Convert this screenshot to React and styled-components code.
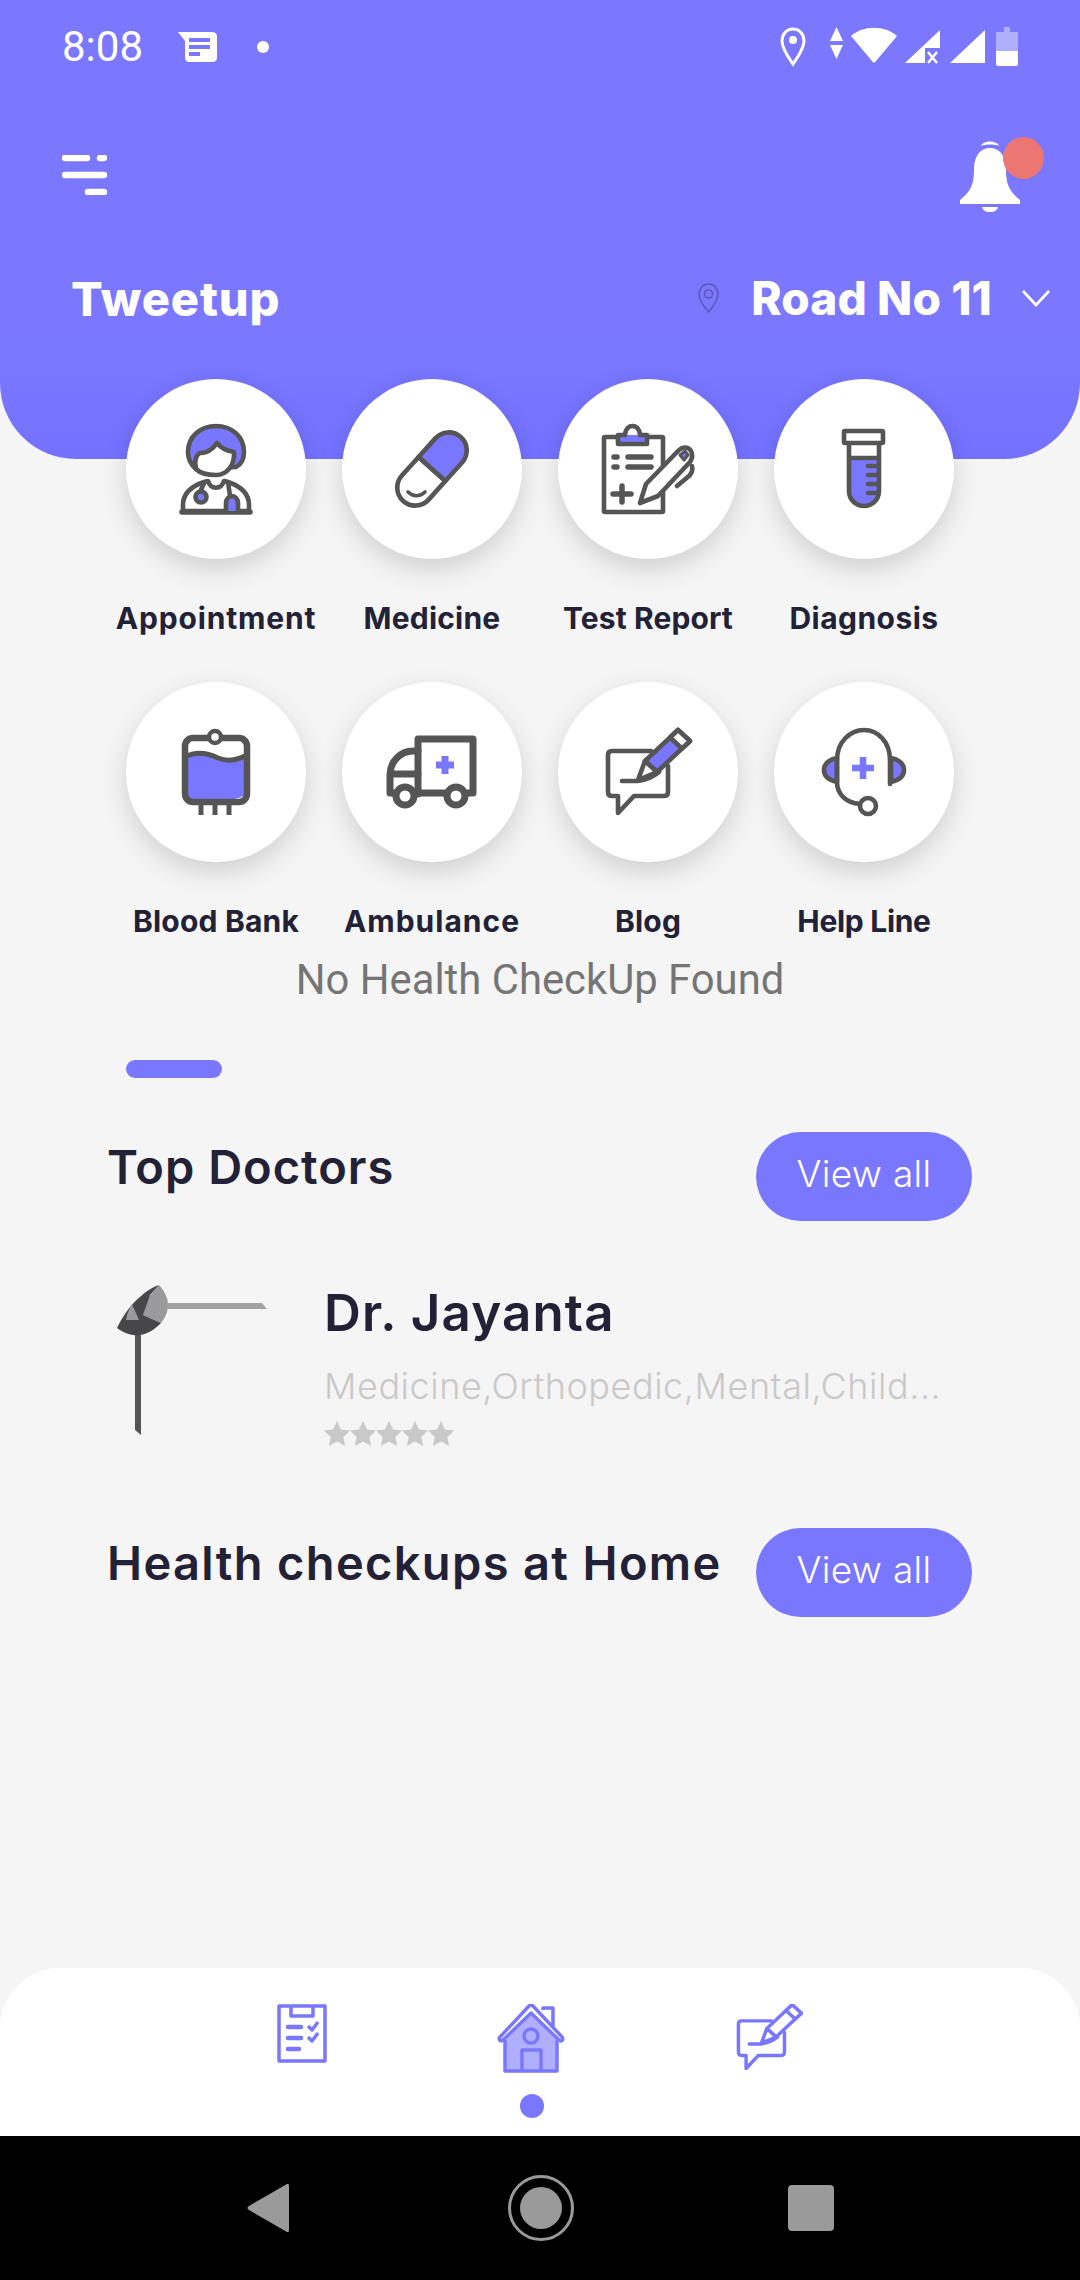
import styled, { createGlobalStyle } from 'styled-components'

const PURPLE = '#7a77ff'
const INK = '#555555'
const DARK = '#232136'

const GlobalStyle = createGlobalStyle`
  html, body {
    margin: 0;
    padding: 0;
    background: #f5f5f5;
  }
  * {
    box-sizing: border-box;
  }
`

const Page = styled.div`
  width: 1080px;
  height: 2280px;
  display: flex;
  flex-direction: column;
  overflow: hidden;
  background: #f5f5f5;
  font-family: Inter, 'Liberation Sans', sans-serif;
`

const Header = styled.header`
  height: 459px;
  flex: none;
  padding-top: 27px;
  background: linear-gradient(#7b78ff 72%, #7471ff);
  border-radius: 0 0 76px 76px;
`

const StatusBar = styled.div`
  height: 39px;
  padding: 0 62px;
  display: flex;
  align-items: center;
  justify-content: space-between;
  color: #fff;
`

const StatusLeft = styled.div`
  display: flex;
  align-items: center;
`

const Clock = styled.span`
  width: 116px;
  font: 400 42px/39px Roboto, sans-serif;
`

const StatusDot = styled.span`
  width: 12px;
  height: 12px;
  margin-left: 40px;
  border-radius: 50%;
  background: #fff;
`

const Toolbar = styled.div`
  height: 77px;
  margin-top: 70px;
  padding: 0 36px 0 62px;
  display: flex;
  align-items: center;
  justify-content: space-between;
`

const BellWrap = styled.div`
  position: relative;
  width: 85px;
  height: 76px;
  padding-top: 3px;
`

const Badge = styled.span`
  position: absolute;
  top: 0;
  right: 0;
  width: 41px;
  height: 42px;
  border-radius: 50%;
  background: #ec7672;
`

const TitleRow = styled.div`
  height: 60px;
  margin-top: 55px;
  padding: 0 30px 0 71px;
  display: flex;
  align-items: center;
  justify-content: space-between;
`

const Brand = styled.h1`
  margin: 0;
  color: #fff;
  font-size: 47px;
  font-weight: 800;
  letter-spacing: 0.9px;
`

const Location = styled.div`
  display: flex;
  align-items: center;
`

const Road = styled.span`
  margin: 0 30px 0 31px;
  color: #fff;
  font-size: 46px;
  font-weight: 800;
  letter-spacing: 0.1px;
  white-space: nowrap;
`

const ServiceGrid = styled.section`
  position: relative;
  margin: -80px 108px 0;
  display: grid;
  grid-template-columns: repeat(4, 216px);
  row-gap: 44px;
`

const Service = styled.div`
  display: flex;
  flex-direction: column;
  align-items: center;
`

const Circle = styled.div`
  width: 180px;
  height: 180px;
  border-radius: 50%;
  background: #fff;
  box-shadow: 0 10px 26px rgba(0, 0, 0, 0.15);
`

const ServiceLabel = styled.span`
  margin-top: 39px;
  color: ${DARK};
  font-size: 30px;
  line-height: 40px;
  font-weight: 700;
  letter-spacing: ${(p) => p.$spacing}px;
  white-space: nowrap;
`

const EmptyNote = styled.p`
  margin: 15px 0 0;
  color: #757575;
  font: 400 41.8px/48px Roboto, sans-serif;
  text-align: center;
`

const Progress = styled.div`
  width: 96px;
  height: 18px;
  margin: 56px 0 0 126px;
  border-radius: 9px;
  background: ${PURPLE};
`

const SectionHead = styled.div`
  margin-top: ${(p) => p.$top}px;
  padding: 0 108px 0 107px;
  display: flex;
  align-items: flex-start;
  justify-content: space-between;
`

const SectionTitle = styled.h2`
  margin: 4px 0 0;
  color: ${DARK};
  font-size: 47px;
  line-height: 62px;
  font-weight: 600;
  letter-spacing: ${(p) => p.$spacing}px;
  white-space: nowrap;
`

const ViewAll = styled.button`
  width: 216px;
  height: 89px;
  flex: none;
  padding: 0 0 7px;
  border: 0;
  border-radius: 45px;
  background: ${PURPLE};
  color: #fff;
  font-family: Inter, sans-serif;
  font-size: 37px;
  font-weight: 300;
  letter-spacing: 0.3px;
`

const DoctorRow = styled.article`
  height: 188px;
  margin-top: 39px;
  padding-left: 90px;
  display: flex;
  gap: 54px;
`

const DoctorInfo = styled.div`
  display: flex;
  flex-direction: column;
`

const DoctorName = styled.h3`
  margin: 18px 0 0;
  color: ${DARK};
  font-size: 51px;
  line-height: 70px;
  font-weight: 600;
  letter-spacing: 1.2px;
`

const Specialty = styled.p`
  margin: 16px 0 0;
  color: #c9c9c9;
  font-size: 36px;
  line-height: 44px;
  font-weight: 300;
  letter-spacing: 0.55px;
  white-space: nowrap;
`

const Stars = styled.div`
  margin-top: 13px;
  display: flex;
`

const BottomBar = styled.nav`
  height: 168px;
  flex: none;
  margin-top: auto;
  padding-top: 36px;
  display: flex;
  justify-content: center;
  align-items: flex-start;
  gap: 170px;
  background: #fff;
  border-radius: 60px 60px 0 0;
`

const NavItem = styled.div`
  display: flex;
  flex-direction: column;
  align-items: center;
`

const ActiveDot = styled.span`
  width: 24px;
  height: 24px;
  margin-top: 21px;
  border-radius: 50%;
  background: ${PURPLE};
`

const SystemNav = styled.div`
  height: 144px;
  flex: none;
  display: flex;
  align-items: center;
  justify-content: center;
  background: #000;
`

const BackKey = styled.svg`
  width: 42px;
  height: 50px;
`

const HomeKey = styled.div`
  width: 66px;
  height: 66px;
  margin: 0 214px 0 219px;
  display: flex;
  align-items: center;
  justify-content: center;
  border: 3px solid #9a9a9a;
  border-radius: 50%;
  &::after {
    content: '';
    width: 42px;
    height: 42px;
    border-radius: 50%;
    background: #9a9a9a;
  }
`

const SquareKey = styled.div`
  width: 46px;
  height: 46px;
  border-radius: 4px;
  background: #9a9a9a;
`

const Glyph = ({ children }) => (
  <svg width="180" height="180" viewBox="0 0 180 180" fill="none" stroke={INK} strokeWidth="4.6" strokeLinecap="round" strokeLinejoin="round">
    {children}
  </svg>
)

const DoctorGlyph = () => (
  <Glyph>
    <path d="M70 90C64 85 62 79 62 73C62 57 75 47 90 47C105 47 118 57 118 73C118 79 116 85 110 88Z" fill={PURPLE} />
    <path d="M70 90C68 82 70 76 74 74C81 74 87 70 91 64C95 69 101 72 108 73C109 86 101 96 90 96C82 96 74 94 70 90Z" fill="#fff" />
    <path d="M57 132V126C57 114 66 107 78 103L82 102C85 111 95 111 98 102L102 103C114 107 123 114 123 126V132Z" fill="#fff" />
    <path d="M56 133H124" strokeWidth="5.5" />
    <path d="M75 111L78 104" />
    <circle cx="75" cy="118" r="5.5" fill={PURPLE} />
    <path d="M100 132V124C100 120 103 117 106 117C109 117 112 120 112 124V132" fill={PURPLE} />
    <path d="M104 117L102 103" />
  </Glyph>
)

const PillGlyph = () => (
  <Glyph>
    <g transform="rotate(-48 90 90)">
      <path d="M90 72H65A18 18 0 0 0 65 108H90Z" fill="#fff" />
      <path d="M90 72H115A18 18 0 0 1 115 108H90Z" fill={PURPLE} />
    </g>
    <path d="M66 113C71 118 78 118 83 113" strokeWidth="3.6" />
  </Glyph>
)

const ReportGlyph = () => (
  <Glyph>
    <rect x="46" y="58" width="59" height="75" rx="1" />
    <path d="M60 65V56H67C68 44 81 44 82 56H89V65Z" fill={PURPLE} />
    <path d="M67 56C68 44 81 44 82 56H75Z" fill="#fff" stroke="none" />
    <path d="M67 56C68 44 81 44 82 56" />
    <path d="M56 78H59M70 78H93M56 88H59M70 88H93" strokeWidth="5.5" />
    <path d="M64 107V123M55 115H73" strokeWidth="5.5" />
    <path d="M82 124L88 105L121 71C125 67 131 68 133 72C135 76 134 80 132 83L100 117Z" fill="#fff" />
    <path d="M122 76L127 72L130 76L126 81Z" fill={PURPLE} strokeWidth="3" />
    <path d="M119 107L131 97C134 94 135 91 134 87" />
  </Glyph>
)

const TubeGlyph = () => (
  <Glyph>
    <path d="M75 79H105V112A15 15 0 0 1 75 112Z" fill={PURPLE} stroke="none" />
    <path d="M75 63V112A15 15 0 0 0 105 112V63" />
    <rect x="70" y="52" width="39" height="12" rx="1" fill="#fff" />
    <path d="M75 79H105M94 87H104M94 96H104M94 105H104M94 114H104" />
  </Glyph>
)

const BagGlyph = () => (
  <Glyph>
    <path d="M59 75C72 68 84 72 92 76C102 80 112 78 121 73V112C104 122 76 122 59 116Z" fill={PURPLE} stroke="none" />
    <rect x="59" y="56" width="62" height="64" rx="8" strokeWidth="6.5" />
    <path d="M59 75C72 68 84 72 92 76C102 80 112 78 121 73" strokeWidth="5" />
    <circle cx="89" cy="55" r="6" fill="#fff" strokeWidth="4.5" />
    <path d="M75 122V133M89 122V133M103 122V133" strokeWidth="5" strokeLinecap="butt" />
  </Glyph>
)

const AmbulanceGlyph = () => (
  <Glyph>
    <path d="M76 112V57H131V111H126" strokeWidth="7" />
    <path d="M102 111H76" strokeWidth="7" />
    <path d="M76 69H71C58 69 48 80 48 93V111H52M48 92H76" strokeWidth="7" />
    <circle cx="63" cy="114" r="9" fill="#fff" strokeWidth="7" />
    <circle cx="114" cy="114" r="9" fill="#fff" strokeWidth="7" />
    <path d="M103 74V92M94 83H112" stroke={PURPLE} strokeWidth="7" strokeLinecap="butt" />
  </Glyph>
)

// same drawing in the grid (grey) and the bottom bar (purple)
const BlogShape = ({ accent }) => (
  <>
    <path d="M93 69H54C51 69 50 71 50 73V110C50 113 52 114 54 114H60V131L76 114H106C109 114 110 112 110 110V84" />
    <path d="M64 99H80C88 98 95 95 101 90" />
    <path d="M87 79L120 48L132 59L99 90Z" fill={accent} />
    <path d="M112 55.5L124 66.5L132 59L120 48Z" fill="#fff" />
    <path d="M87 79L80 98L99 90Z" fill="#fff" />
  </>
)

const BlogGlyph = () => (
  <Glyph>
    <BlogShape accent={PURPLE} />
  </Glyph>
)

const HelpGlyph = () => (
  <Glyph>
    <path d="M63 76C54 78 50 82 50 88C50 94 54 98 63 100Z" fill={PURPLE} />
    <path d="M117 76C126 78 130 82 130 88C130 94 126 98 117 100Z" fill={PURPLE} />
    <path d="M116 102V78C116 60 104 48 90 48C76 48 63 60 63 78V100C63 112 72 121 86 122" />
    <circle cx="94" cy="124" r="8" fill="#fff" />
    <path d="M89 75V97M78 86H100" stroke={PURPLE} strokeWidth="6.5" strokeLinecap="butt" />
  </Glyph>
)

const services = [
  { label: 'Appointment', icon: DoctorGlyph, spacing: 0.85 },
  { label: 'Medicine', icon: PillGlyph, spacing: 0.2 },
  { label: 'Test Report', icon: ReportGlyph, spacing: 0.1 },
  { label: 'Diagnosis', icon: TubeGlyph, spacing: 0.45 },
  { label: 'Blood Bank', icon: BagGlyph, spacing: 0.2 },
  { label: 'Ambulance', icon: AmbulanceGlyph, spacing: 1 },
  { label: 'Blog', icon: BlogGlyph, spacing: 0.2 },
  { label: 'Help Line', icon: HelpGlyph, spacing: -0.3 },
]

function App() {
  return (
    <Page>
      <GlobalStyle />
      <Header>
        <StatusBar>
          <StatusLeft>
            <Clock>8:08</Clock>
            <svg width="39" height="30" viewBox="0 0 39 30">
              <path d="M0 0H34C37 0 39 2 39 4V26C39 28 37 30 35 30H11C9 30 7 28 7 26V9Z" fill="#fff" />
              <path d="M11 6H32V10H11ZM11 13H32V17H11ZM11 20H22V24H11Z" fill={PURPLE} />
            </svg>
            <StatusDot />
          </StatusLeft>
          <svg width="238" height="40" viewBox="0 0 238 40">
            <path d="M13 2C6 2 2 8 2 14C2 22 9 31 13 37C17 31 24 22 24 14C24 8 20 2 13 2Z" fill="none" stroke="#fff" strokeWidth="3" />
            <circle cx="13" cy="13" r="4" fill="#fff" />
            <path d="M56.5 0L63 14H50ZM56.5 32L50 18H63Z" fill="#fff" />
            <path d="M71 9C83 -2 105 -2 117 9L96 34C95 36 93 36 92 34Z" fill="#fff" />
            <path d="M160 3V21H145V36H125Z" fill="#fff" />
            <path d="M148 25L157 36M157 25L148 36" stroke="#fff" strokeWidth="2.5" />
            <path d="M205 3V36H170Z" fill="#fff" />
            <path d="M224 0H230V5H238V24H216V5H224Z" fill="#fff" opacity="0.4" />
            <path d="M216 24H238V37C238 38 237 39 236 39H218C217 39 216 38 216 37Z" fill="#fff" />
          </svg>
        </StatusBar>

        <Toolbar>
          <svg width="45" height="40" viewBox="0 0 45 40" fill="none" stroke="#fff" strokeWidth="6.5" strokeLinecap="round">
            <path d="M3 3H25M38 3H42M3 20H42M26 37H42" />
          </svg>
          <BellWrap>
            <svg width="62" height="72" viewBox="0 0 62 72" fill="#fff">
              <path d="M22 6C24 0 38 0 40 6C36 4 26 4 22 6Z" />
              <path d="M31 8C20 8 15 18 15 30C15 45 11 52 1 60V64H61V60C51 52 47 45 47 30C47 18 42 8 31 8Z" />
              <path d="M23 67H39C38 74 24 74 23 67Z" />
            </svg>
            <Badge />
          </BellWrap>
        </Toolbar>

        <TitleRow>
          <Brand>Tweetup</Brand>
          <Location>
            <svg width="23" height="30" viewBox="0 0 23 30" fill="none" stroke="#5b59b8" strokeWidth="1.6">
              <path d="M11.5 1C6 1 2 5.5 2 11C2 17 8 25 11.5 29C15 25 21 17 21 11C21 5.5 17 1 11.5 1Z" />
              <circle cx="11.5" cy="11" r="4" />
            </svg>
            <Road>Road No 11</Road>
            <svg width="28" height="17" viewBox="0 0 28 17" fill="none" stroke="#fff" strokeWidth="2.6">
              <path d="M1 1L14 15L27 1" />
            </svg>
          </Location>
        </TitleRow>
      </Header>

      <ServiceGrid>
        {services.map(({ label, icon: Icon, spacing }) => (
          <Service key={label}>
            <Circle>
              <Icon />
            </Circle>
            <ServiceLabel $spacing={spacing}>{label}</ServiceLabel>
          </Service>
        ))}
      </ServiceGrid>

      <EmptyNote>No Health CheckUp Found</EmptyNote>
      <Progress />

      <SectionHead $top={54}>
        <SectionTitle $spacing={1}>Top Doctors</SectionTitle>
        <ViewAll>View all</ViewAll>
      </SectionHead>

      <DoctorRow>
        <svg width="180" height="180" viewBox="0 0 180 180">
          <path d="M78 43H172L177 49H78Z" fill="#a2a2a2" />
          <path d="M45 75H51V175L45 170Z" fill="#555" />
          <path d="M69 25C75 32 78 38 78 45C78 52 75 58 71 63L53 55L58 38Z" fill="#9a9a9c" />
          <path d="M69 25C55 30 38 45 27 68C35 74 43 76 50 75C58 74 65 69 71 63L53 55L60 35Z" fill="#47474a" />
          <path d="M42 44L49 60L36 60C37 54 39 49 42 44Z" fill="#9a9a9c" />
        </svg>
        <DoctorInfo>
          <DoctorName>Dr. Jayanta</DoctorName>
          <Specialty>Medicine,Orthopedic,Mental,Child...</Specialty>
          <Stars>
            {[0, 1, 2, 3, 4].map((i) => (
              <svg key={i} width="26" height="25" viewBox="0 0 26 25" fill="#c9c9c9">
                <path d="M13 0L17 8.5L26 9.6L19.4 16L21.1 25L13 20.5L4.9 25L6.6 16L0 9.6L9 8.5Z" />
              </svg>
            ))}
          </Stars>
        </DoctorInfo>
      </DoctorRow>

      <SectionHead $top={80}>
        <SectionTitle $spacing={1.35}>Health checkups at Home</SectionTitle>
        <ViewAll>View all</ViewAll>
      </SectionHead>

      <BottomBar>
        <NavItem>
          <svg width="50" height="59" viewBox="0 0 50 59" fill="none" stroke={PURPLE} strokeWidth="3.5" strokeLinejoin="round">
            <rect x="2" y="2" width="46" height="55" />
            <path d="M14 2V12H36V2" />
            <path d="M11 23H24M11 34H24M11 45H22" strokeWidth="4.5" strokeLinecap="round" />
            <path d="M31 22L35 26L41 18M31 33L35 37L41 29" strokeWidth="3.5" />
          </svg>
        </NavItem>
        <NavItem>
          <svg width="69" height="69" viewBox="1 0 67 69" fill="none" stroke={PURPLE} strokeWidth="3.5" strokeLinejoin="round">
            <path d="M46 6V4H56V22" />
            <path d="M8 36L34 10L60 36V67H8Z" fill="#b0aeff" stroke="none" />
            <path d="M8 36V67H60V36" />
            <path d="M3 33L32 2C33 1 35 1 36 2L65 33C67 36 64 38 62 36L34 9L6 36C4 38 1 36 3 33Z" fill="#fff" />
            <circle cx="34" cy="32" r="7" />
            <path d="M25 67V46H44V67" />
          </svg>
          <ActiveDot />
        </NavItem>
        <NavItem>
          <svg width="67" height="66" viewBox="48 47 85 86" fill="none" stroke={PURPLE} strokeWidth="4.5" strokeLinecap="round" strokeLinejoin="round">
            <BlogShape accent="#fff" />
          </svg>
        </NavItem>
      </BottomBar>

      <SystemNav>
        <BackKey viewBox="0 0 42 50">
          <path d="M40 1L2 23C0 24 0 26 2 27L40 49C41 49 42 49 42 47V3C42 1 41 1 40 1Z" fill="#9a9a9a" />
        </BackKey>
        <HomeKey />
        <SquareKey />
      </SystemNav>
    </Page>
  )
}

export default App
